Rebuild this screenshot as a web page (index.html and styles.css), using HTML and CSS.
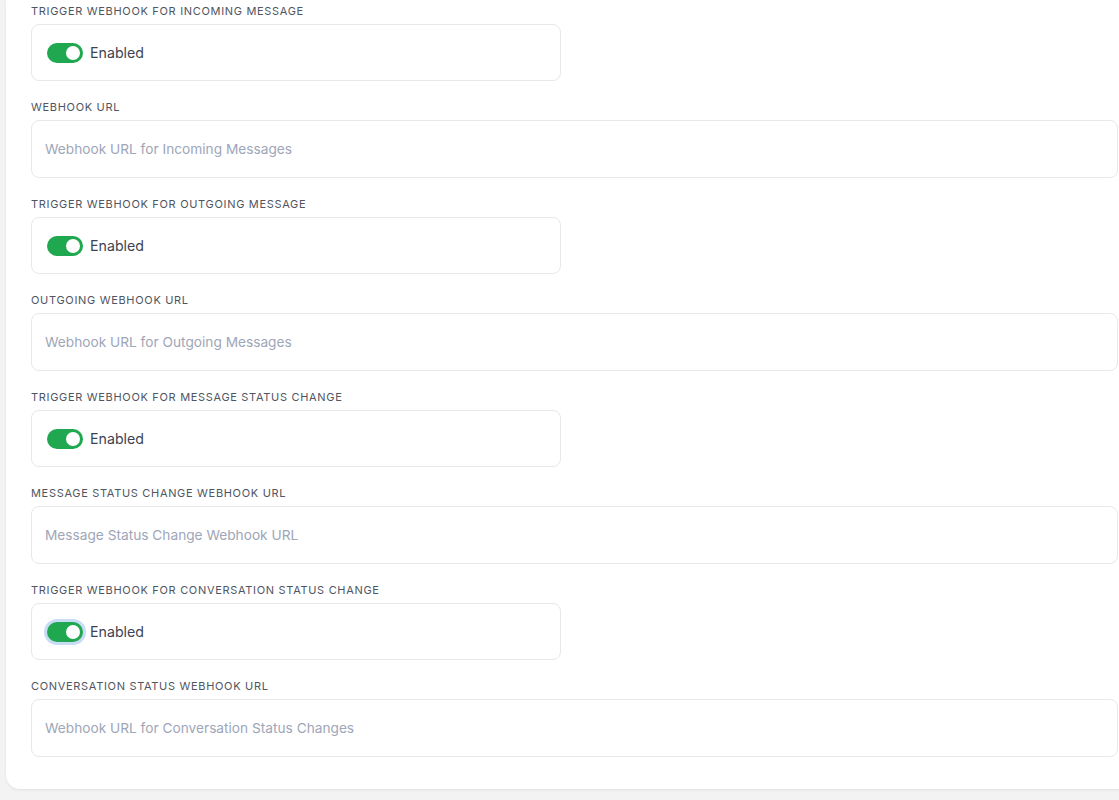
FILE: index.html
```html
<!DOCTYPE html>
<html lang="en">
<head>
<meta charset="utf-8">
<title>Webhook settings</title>
<link rel="stylesheet" href="styles.css">
</head>
<body>
<div class="page">
  <section class="card">
    <div class="field">
      <label class="label">Trigger webhook for incoming message</label>
      <div class="toggle-box">
        <span class="switch"><span class="knob"></span></span>
        <span class="toggle-text">Enabled</span>
      </div>
    </div>
    <div class="field">
      <label class="label">Webhook URL</label>
      <input class="input" type="text" placeholder="Webhook URL for Incoming Messages">
    </div>
    <div class="field">
      <label class="label">Trigger webhook for outgoing message</label>
      <div class="toggle-box">
        <span class="switch"><span class="knob"></span></span>
        <span class="toggle-text">Enabled</span>
      </div>
    </div>
    <div class="field">
      <label class="label">Outgoing webhook URL</label>
      <input class="input" type="text" placeholder="Webhook URL for Outgoing Messages">
    </div>
    <div class="field">
      <label class="label">Trigger webhook for message status change</label>
      <div class="toggle-box">
        <span class="switch"><span class="knob"></span></span>
        <span class="toggle-text">Enabled</span>
      </div>
    </div>
    <div class="field">
      <label class="label">Message status change webhook URL</label>
      <input class="input" type="text" placeholder="Message Status Change Webhook URL">
    </div>
    <div class="field">
      <label class="label">Trigger webhook for conversation status change</label>
      <div class="toggle-box">
        <span class="switch focused"><span class="knob"></span></span>
        <span class="toggle-text">Enabled</span>
      </div>
    </div>
    <div class="field">
      <label class="label">Conversation status webhook URL</label>
      <input class="input" type="text" placeholder="Webhook URL for Conversation Status Changes">
    </div>
  </section>
</div>
</body>
</html>
```

FILE: styles.css
```css
html, body {
  margin: 0;
  padding: 0;
  overflow: hidden;
  background: #f3f3f4;
  font-family: "Inter", "Open Sans", sans-serif;
}

.page {
  padding: 0 0 11px 6px;
}

.card {
  width: 1137px;
  box-sizing: border-box;
  background: #ffffff;
  border-radius: 0 0 14px 14px;
  box-shadow: 0 1px 3px rgba(0, 0, 0, 0.08);
  padding: 4px 25px 32px 25px;
  display: flex;
  flex-direction: column;
  gap: 19px;
}

.field {
  display: flex;
  flex-direction: column;
  gap: 5px;
}

.label {
  font-size: 11px;
  line-height: 15px;
  text-transform: uppercase;
  letter-spacing: 0.68px;
  color: #4f5561;
  font-weight: 400;
}

.toggle-box {
  width: 530px;
  height: 57px;
  box-sizing: border-box;
  border: 1px solid #e6e8ec;
  border-radius: 8px;
  display: flex;
  align-items: center;
  gap: 7px;
  padding: 0 15px;
}

.switch {
  width: 36px;
  height: 20px;
  border-radius: 10px;
  background: #1fa84f;
  position: relative;
  flex: none;
}

.switch.focused {
  box-shadow: 0 0 0 3px #c9dcf6;
}

.knob {
  position: absolute;
  top: 3px;
  right: 3px;
  width: 14px;
  height: 14px;
  border-radius: 50%;
  background: #ffffff;
}

.toggle-text {
  font-size: 14.2px;
  color: #3d4350;
}

.input {
  width: 1087px;
  height: 58px;
  box-sizing: border-box;
  border: 1px solid #e6e8ec;
  border-radius: 8px;
  padding: 0 13px;
  font-family: inherit;
  font-size: 13.7px;
  color: #374151;
  background: #ffffff;
  outline: none;
}

.input::placeholder {
  color: #9ea6b8;
}
```
